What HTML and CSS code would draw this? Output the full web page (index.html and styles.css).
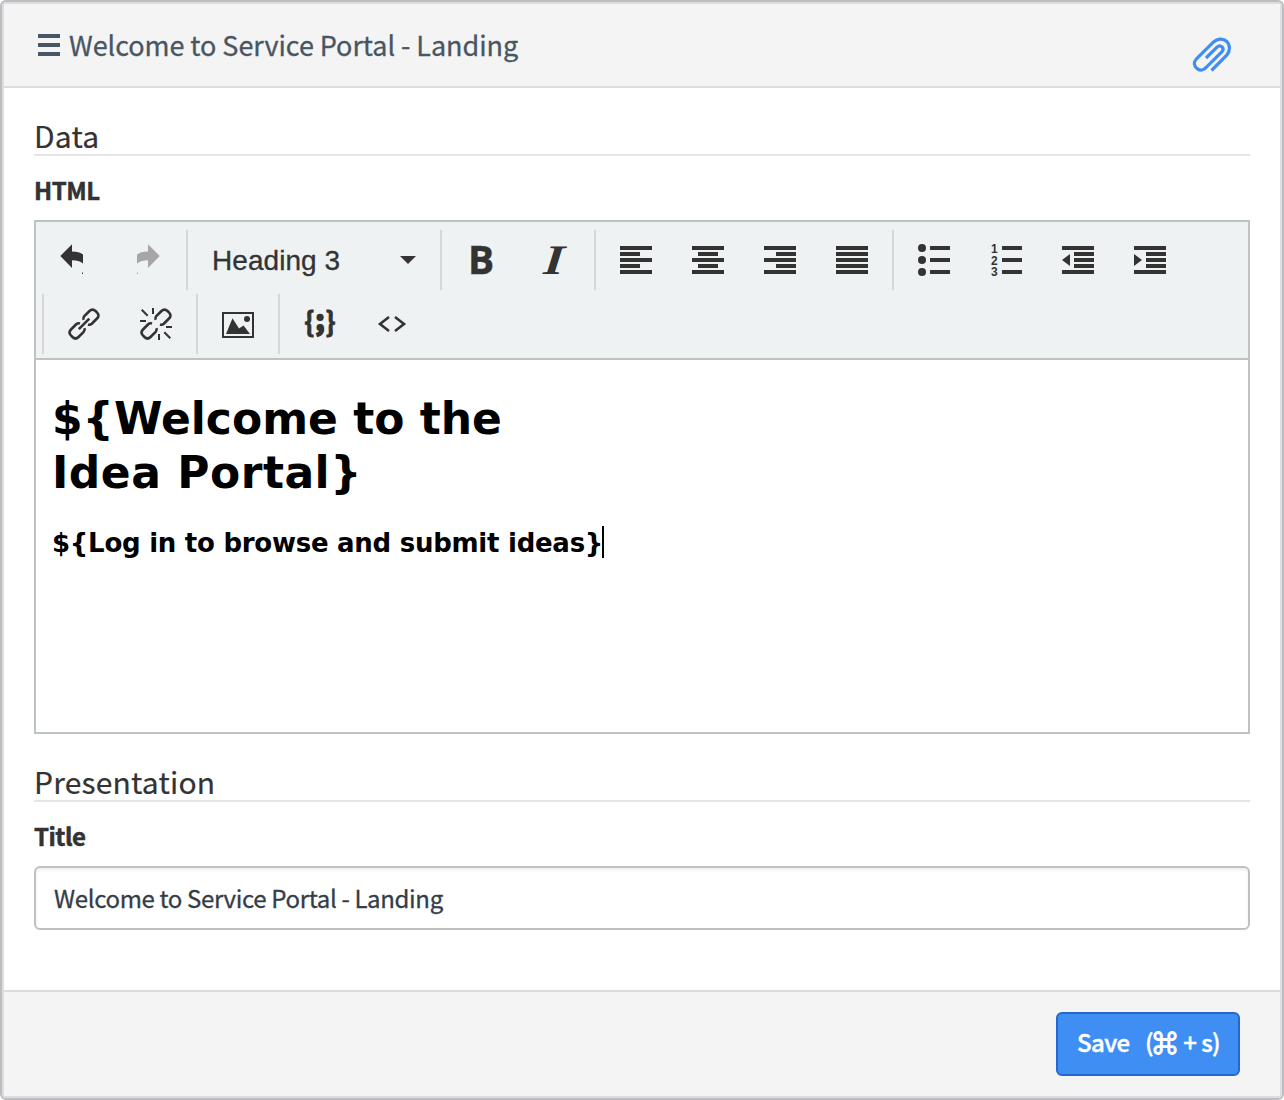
FILE: index.html
```html
<!DOCTYPE html>
<html lang="en">
<head>
<meta charset="utf-8">
<title>Welcome to Service Portal - Landing</title>
<link rel="stylesheet" href="styles.css">
</head>
<body>
<main class="dialog">
  <header class="dialog-header">
    <svg class="menu-icon" viewBox="0 0 22 22"><path d="M0 0h22v4H0zM0 9h22v4H0zM0 18h22v4H0z"/></svg>
    <h1 class="dialog-title">Welcome to Service Portal - Landing</h1>
    <svg class="clip" viewBox="0 0 40 36"><path d="M14 21 25 10.200C28.700 6.800 33.200 11.300 29.800 15L14.800 29.700C12 33.300 8 34.200 5 31.500C1.500 28.500 1.500 25 4.700 21.500L20.800 5.700C25 1.300 31 .8 34.800 4.500C38.500 8.300 38.300 14.300 34.500 18.500L19.500 33.500"/></svg>
  </header>

  <section class="dialog-body">
    <h2 class="section-title">Data</h2>
    <div class="label">HTML</div>
    <div class="editor">
      <div class="toolbar">
        <div class="tool-row">
          <div class="group">
            <button class="tool"><svg viewBox="0 0 32 32"><path d="M2.3 12 14 .3v7.2c5 0 8.500 1 11 3v9c-3-2.500-6-3.200-11-3.200V24zM24 28.500h1v1.500h-1z"/></svg></button>
            <button class="tool disabled"><svg viewBox="0 0 32 32"><path d="M29.700 12 18 .3v7.200c-5 0-8.500 1-11 3v9c3-2.500 6-3.200 11-3.200V24zM7 28.500h1v1.500H7z"/></svg></button>
          </div>
          <div class="group">
            <div class="select"><span>Heading 3</span><svg class="caret" viewBox="0 0 16 8"><path d="M0 0h16L8 8z"/></svg></div>
          </div>
          <div class="group">
            <button class="tool bold"><span>B</span></button>
            <button class="tool italic"><span>I</span></button>
          </div>
          <div class="group">
            <button class="tool"><svg viewBox="0 0 32 32"><path d="M0 2h32v4H0zM0 8h20v4H0zM0 14h32v4H0zM0 20h20v4H0zM0 26h32v4H0z"/></svg></button>
            <button class="tool"><svg viewBox="0 0 32 32"><path d="M0 2h32v4H0zM6 8h20v4H6zM0 14h32v4H0zM6 20h20v4H6zM0 26h32v4H0z"/></svg></button>
            <button class="tool"><svg viewBox="0 0 32 32"><path d="M0 2h32v4H0zM12 8h20v4H12zM0 14h32v4H0zM12 20h20v4H12zM0 26h32v4H0z"/></svg></button>
            <button class="tool"><svg viewBox="0 0 32 32"><path d="M0 2h32v4H0zM0 8h32v4H0zM0 14h32v4H0zM0 20h32v4H0zM0 26h32v4H0z"/></svg></button>
          </div>
          <div class="group">
            <button class="tool"><svg viewBox="0 0 32 32"><circle cx="4" cy="4" r="4"/><circle cx="4" cy="16" r="4"/><circle cx="4" cy="28" r="4"/><path d="M12 2h20v4H12zM12 14h20v4H12zM12 26h20v4H12z"/></svg></button>
            <button class="tool"><svg viewBox="0 0 32 32"><path d="M12 2h20v4H12zM12 14h20v4H12zM12 26h20v4H12z"/><g class="numerals"><text x="1" y="8.500">1</text><text x="1" y="20.500">2</text><text x="1" y="32">3</text></g></svg></button>
            <button class="tool"><svg viewBox="0 0 32 32"><path d="M0 2h32v4H0zM12 8h20v4H12zM12 14h20v4H12zM12 20h20v4H12zM0 26h32v4H0zM0 16l8-6v12z"/></svg></button>
            <button class="tool"><svg viewBox="0 0 32 32"><path d="M0 2h32v4H0zM12 8h20v4H12zM12 14h20v4H12zM12 20h20v4H12zM0 26h32v4H0zM8 16l-8-6v12z"/></svg></button>
          </div>
        </div>
        <div class="tool-row second">
          <div class="group">
            <button class="tool"><svg class="line" viewBox="0 0 32 32"><path d="M15.500 11.800C15 10 15.300 9.200 16.300 8.200L21.500 3C23.500 1 25.500 1 27.500 3L28.900 4.400C31 6.500 31 8.500 29 10.500L23.800 15.700C22.600 16.800 21.500 17 20 16.500M16.500 20.200C17 22 16.700 22.800 15.700 23.800L10.500 29C8.500 31 6.500 31 4.500 29L3.100 27.600C1 25.500 1 23.500 3 21.500L8.200 16.300C9.400 15.200 10.500 15 12 15.500M10.800 21.200 21.300 10.700"/></svg></button>
            <button class="tool"><svg class="line" viewBox="0 0 32 32"><path d="M15.500 11.800C15 10 15.300 9.200 16.300 8.200L21.500 3C23.500 1 25.500 1 27.500 3L28.900 4.400C31 6.500 31 8.500 29 10.500L23.800 15.700C22.600 16.800 21.500 17 20 16.500M16.500 20.200C17 22 16.700 22.800 15.700 23.800L10.500 29C8.500 31 6.500 31 4.500 29L3.100 27.600C1 25.500 1 23.500 3 21.500L8.200 16.300C9.400 15.200 10.500 15 12 15.500"/><path class="rays" d="M13 0v6M1.700 1.700l6 6M0 13h6M26 19h6M19 26v6M24.300 24.300l6 6"/></svg></button>
          </div>
          <div class="group">
            <button class="tool"><svg viewBox="0 0 32 32"><path fill-rule="evenodd" d="M0 4h32v26H0zM2 6v22h28V6z"/><path d="M4 26 10.500 10.300 17 20.500l4.500-3L28 26z"/><circle cx="25" cy="11" r="3"/></svg></button>
          </div>
          <div class="group">
            <button class="tool braces"><span>{</span><span class="semi">;</span><span>}</span></button>
            <button class="tool"><svg class="line angle" viewBox="0 0 32 32"><path d="M13 9 4 16l9 7M19 9l9 7-9 7"/></svg></button>
          </div>
        </div>
      </div>
      <div class="content">
        <div class="content-h1">${Welcome to the<br><span class="wide">Idea Portal}</span></div>
        <div class="content-h3"><span>${Log in to browse and submit ideas}</span><i class="cursor"></i></div>
      </div>
    </div>

    <h2 class="section-title presentation">Presentation</h2>
    <label class="label" for="title">Title</label>
    <input class="field" id="title" type="text" value="Welcome to Service Portal - Landing">
  </section>

  <footer class="dialog-footer">
    <button class="save"><span>Save</span><span>(<span class="cmd">⌘</span> + s)</span></button>
  </footer>
</main>
</body>
</html>
```
FILE: styles.css
```css
* { box-sizing: border-box; }
body { margin: 0; font-family: "Noto Sans CJK SC", sans-serif; color: #333; background: #fff; }
h1, h2 { margin: 0; font-weight: 400; }
button { border: 0; background: none; padding: 0; margin: 0; font: inherit; color: inherit; }
svg { display: block; fill: currentColor; overflow: visible; }

.dialog {
  width: 1284px; height: 1100px;
  display: flex; flex-direction: column;
  border: 2px solid #bbbdc1; border-radius: 6px;
  box-shadow: inset 0 0 0 2px #dddddf;
  padding: 2px;
}
.dialog-header {
  height: 84px; flex: none;
  display: flex; align-items: flex-start;
  padding: 0 48px 0 34px;
  background: #f4f4f4; color: #485663;
  border-bottom: 2px solid #dcdcdd;
}
.menu-icon { width: 22px; height: 22px; margin-top: 30px; }
.dialog-title { flex: 1; margin-left: 9px; font-size: 27px; line-height: 40px; padding-top: 21px; letter-spacing: -.06px; white-space: nowrap; -webkit-text-stroke: .3px; }
.clip { width: 40px; height: 36px; margin-top: 33px; fill: none; stroke: #3f8ef4; stroke-width: 3.200; }

.dialog-body { flex: 1; display: flex; flex-direction: column; padding: 26px 30px 0; }
.section-title { height: 42px; border-bottom: 2px solid #e5e5e5; font-size: 30px; line-height: 42px; letter-spacing: .2px; -webkit-text-stroke: .2px; }
.label { display: block; height: 64px; font-size: 24px; font-weight: 700; line-height: 36px; padding-top: 16px; letter-spacing: -.5px; -webkit-text-stroke: .5px; }

.editor { height: 514px; border: 2px solid #bdc2c2; }
.toolbar { height: 138px; background: #eef2f3; border-bottom: 2px solid #bdc2c2; padding-top: 8px; }
.tool-row { display: flex; height: 60px; margin-bottom: 4px; }
.tool-row.second { margin-left: 6px; }
.group { display: flex; padding: 0 4px; border-left: 2px solid #d7d7d9; }
.tool-row:first-child .group:first-child { border-left: 0; padding-left: 2px; }
.tool { width: 72px; height: 60px; display: flex; align-items: center; justify-content: center; }
.tool svg { width: 32px; height: 32px; }
.disabled { color: #a6a6a6; }
.tool .line { fill: none; stroke: currentColor; stroke-width: 2.600; }
.tool .rays { stroke-width: 2; }
.numerals { font: 700 12px "Liberation Sans", sans-serif; }
.select { width: 244px; display: flex; align-items: center; justify-content: space-between; padding: 1px 20px 0; font: 28px "Liberation Sans", sans-serif; letter-spacing: .05px; -webkit-text-stroke: .3px; }
.caret { width: 16px; height: 8px; margin-top: -2px; }
.bold { font: 700 39px "Open Sans", sans-serif; padding: 0 2px 4px 0; -webkit-text-stroke: .4px; }
.italic { font: italic 700 42px "Liberation Serif", serif; }
.italic span { display: block; transform: scaleX(1.250) skewX(-4deg); }
.braces { font: 700 27px "Noto Sans CJK SC", sans-serif; padding-bottom: 8px; gap: 1px; -webkit-text-stroke: .8px; }
.semi { font-size: 28px; padding-bottom: 4px; -webkit-text-stroke: 2px; }

.content { padding: 32px 16px 0; font-family: "DejaVu Sans", sans-serif; font-weight: 700; color: #000; }
.content-h1 { font-size: 44px; line-height: 54px; white-space: nowrap; }
.wide { letter-spacing: .5px; }
.content-h3 { display: flex; align-items: center; margin-top: 26px; height: 32px; font-size: 26px; letter-spacing: -.26px; white-space: nowrap; }
.content-h3 span { padding-top: 2px; }
.cursor { width: 2px; height: 32px; margin-left: -1px; background: #000; }

.presentation { margin-top: 26px; }
.field {
  height: 64px; padding: 0 18px 2px;
  border: 2px solid #bdc0c4; border-radius: 6px;
  background: #fff; box-shadow: inset 0 2px 3px rgba(0, 0, 0, .07);
  font: 24px "Noto Sans CJK SC", sans-serif; letter-spacing: -.35px; color: #343d47;
  -webkit-text-stroke: .3px;
}
.dialog-footer {
  height: 106px; flex: none;
  display: flex; justify-content: flex-end;
  padding: 20px 40px 0 0;
  background: #f4f4f4; border-top: 2px solid #dcdcdd;
}
.save {
  width: 184px; height: 64px;
  display: flex; align-items: center; justify-content: space-between;
  padding: 0 18px 5px 19px;
  background: #3f8ef4; border: 2px solid #2468ce; border-radius: 6px;
  color: #fff; font-size: 24px; font-weight: 500; letter-spacing: -.6px; white-space: nowrap;
  -webkit-text-stroke: .4px;
}
.cmd { margin-right: 2px; -webkit-text-stroke: 1.800px; }
```
